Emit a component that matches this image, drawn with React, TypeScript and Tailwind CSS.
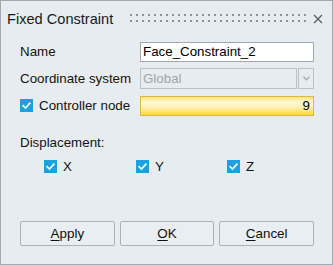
import React from "react";

function Check({ className = "" }: { className?: string }) {
  return (
    <div className={`w-[13px] h-[13px] bg-[#1ba1e2] flex items-center justify-center shrink-0 ${className}`}>
      <svg width="13" height="13" viewBox="0 0 13 13">
        <polyline points="3.2,6.8 5.5,9 9.8,4.3" fill="none" stroke="#ffffff" strokeWidth="1.7" strokeLinecap="square" />
      </svg>
    </div>
  );
}

function Btn({ u, rest }: { u: string; rest: string }) {
  return (
    <button className="w-[95px] h-[25px] border border-[#adb2b6] rounded-[2px] bg-[#e8eef1] text-[13.4px] text-[#111] flex items-center justify-center leading-none">
      <span>
        <span className="underline underline-offset-[2px]">{u}</span>
        {rest}
      </span>
    </button>
  );
}

export default function App() {
  return (
    <div
      className="w-[333px] h-[265px] border border-[#a3a9ae] bg-[#e6ecef] flex flex-col text-[#141414]"
      style={{ fontFamily: '"Liberation Sans", Arial, sans-serif' }}
    >
      {/* title bar */}
      <div className="h-[38px] flex items-center pl-[6px] relative shrink-0">
        <span className="text-[14.6px] text-[#1a1a1a]">Fixed Constraint</span>
        <svg className="absolute left-[129px] top-[13px]" width="176" height="8" viewBox="0 0 176 8">
          <defs>
            <pattern id="dots" x="0" y="0" width="6" height="6" patternUnits="userSpaceOnUse">
              <rect x="0" y="0" width="2" height="2" fill="#8e9397" />
            </pattern>
          </defs>
          <rect x="0" y="0" width="176" height="8" fill="url(#dots)" />
        </svg>
        <svg className="absolute left-[312px] top-[13px]" width="10" height="10" viewBox="0 0 10 10">
          <path d="M1 1 L9 9 M9 1 L1 9" stroke="#5a5e62" strokeWidth="1.3" />
        </svg>
      </div>

      <div className="pl-[19px] pr-[18px] flex flex-col text-[13.33px]">
        <div className="mt-[3px] h-[20px] flex items-center">
          <span className="w-[120px]">Name</span>
          <div className="flex-1 h-[20px] bg-white border border-[#a4a8ac] flex items-center pl-[2px] text-black">
            Face_Constraint_2
          </div>
        </div>

        <div className="mt-[6px] h-[21px] flex items-center">
          <span className="w-[120px]">Coordinate system</span>
          <div className="flex-1 h-[21px] flex gap-[1px]">
            <div className="flex-1 border border-[#bcc1c5] flex items-center pl-[2px] text-[#a2a6aa]">Global</div>
            <div className="w-[16px] border border-[#bcc1c5] flex items-center justify-center">
              <svg width="7" height="5" viewBox="0 0 7 5">
                <path d="M0.5 0.8 L3.5 3.8 L6.5 0.8" fill="none" stroke="#a9adb1" strokeWidth="1.4" />
              </svg>
            </div>
          </div>
        </div>

        <div className="mt-[7px] h-[20px] flex items-center">
          <div className="w-[120px] flex items-center">
            <Check />
            <span className="ml-[6px]">Controller node</span>
          </div>
          <div
            className="flex-1 h-[20px] border border-[#dcb842] flex items-center justify-end pr-[3px] text-black"
            style={{ background: "linear-gradient(to bottom, #fbe57c 0%, #fff8d8 30%, #fff3b8 55%, #ffe063 85%, #ffd634 100%)" }}
          >
            9
          </div>
        </div>

        <div className="mt-[19px] leading-[15px]">Displacement:</div>

        <div className="mt-[10px] flex pl-[24px] h-[13px] items-center">
          <div className="w-[92px] flex items-center">
            <Check />
            <span className="ml-[6px]">X</span>
          </div>
          <div className="w-[91px] flex items-center">
            <Check />
            <span className="ml-[6px]">Y</span>
          </div>
          <div className="flex items-center">
            <Check />
            <span className="ml-[6px]">Z</span>
          </div>
        </div>

        <div className="mt-[48px] flex gap-[5px]">
          <Btn u="A" rest="pply" />
          <Btn u="O" rest="K" />
          <Btn u="C" rest="ancel" />
        </div>
      </div>
    </div>
  );
}
